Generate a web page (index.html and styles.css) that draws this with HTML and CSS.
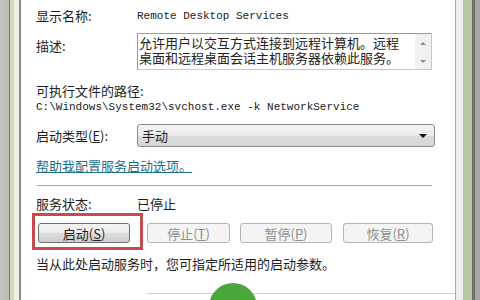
FILE: index.html
```html
<!DOCTYPE html>
<html>
<head>
    <meta charset="utf-8">
    <link rel="stylesheet" href="styles.css">
</head>
<body>
    <div class="screen">
        <div class="frame-left"></div>

        <div class="dialog">
            <div class="row row-name">
                <span class="label">显示名称:</span>
                <span class="mono">Remote Desktop Services</span>
            </div>

            <div class="row row-desc">
                <span class="label">描述:</span>
                <div class="desc-box">
                    <div class="desc-text">
                        <div>允许用户以交互方式连接到远程计算机。远程</div>
                        <div>桌面和远程桌面会话主机服务器依赖此服务。</div>
                    </div>
                    <div class="scroll">
                        <span class="arrow-up"></span>
                        <span class="arrow-down"></span>
                    </div>
                </div>
            </div>

            <div class="path-label">可执行文件的路径:</div>
            <div class="mono path">C:\Windows\System32\svchost.exe -k NetworkService</div>

            <div class="row row-type">
                <span class="label">启动类型(<u>E</u>):</span>
                <div class="combo">
                    <span>手动</span>
                    <span class="combo-arrow"></span>
                </div>
            </div>

            <a class="help-link" href="#">帮助我配置服务启动选项。</a>

            <div class="separator"></div>

            <div class="row row-status">
                <span class="label">服务状态:</span>
                <span>已停止</span>
            </div>

            <div class="buttons">
                <div class="start-wrap">
                    <button class="btn btn-start">启动(<u>S</u>)</button>
                    <span class="highlight"></span>
                </div>
                <button class="btn btn-stop" disabled>停止(<u>T</u>)</button>
                <button class="btn btn-pause" disabled>暂停(<u>P</u>)</button>
                <button class="btn btn-resume" disabled>恢复(<u>R</u>)</button>
            </div>

            <div class="hint">当从此处启动服务时，您可指定所适用的启动参数。</div>

            <div class="footer"></div>
            <div class="watermark"></div>
        </div>

        <div class="frame-right"></div>
    </div>
</body>
</html>
```

FILE: styles.css
```css
body {
    margin: 0;
    font-family: "Noto Sans CJK SC", "Liberation Sans", sans-serif;
    font-size: 13px;
    color: #1e1e1e;
}

.screen {
    display: flex;
    width: 480px;
    height: 300px;
    overflow: hidden;
    background: #fff;
}

/* window frame pieces on both sides */
.frame-left {
    width: 21px;
    flex-shrink: 0;
    background: linear-gradient(to right,
        #c3c5c0 0, #b9bcb6 9px,
        #7d807a 9px, #7d807a 10px,
        #d2dab8 10px, #d2dab8 14px,
        #eef0ea 14px, #eef0ea 19px,
        #8c8e8a 19px, #8c8e8a 21px);
}

.frame-right {
    width: 25px;
    flex-shrink: 0;
    background: linear-gradient(to right,
        #a9aba8 0, #a9aba8 1px,
        #eef0ec 1px, #eef0ec 8px,
        #b6c69e 8px, #b6c69e 17px,
        #6f716e 17px, #6f716e 20px,
        #a6a8a5 20px);
}

.dialog {
    position: relative;
    flex: 1;
    padding-left: 15px;
    overflow: hidden;
    background: #fff;
}

.row {
    display: grid;
    grid-template-columns: 101px 1fr;
    align-items: start;
}

.row-name {
    height: 32px;
    line-height: 32px;
}

.mono {
    font-family: "Liberation Mono", monospace;
    font-size: 11px;
    color: #202020;
}

.row-desc {
    margin-top: 1px;
}

.row-desc .label {
    line-height: 26px;
}

.desc-box {
    display: flex;
    width: 295px;
    height: 37px;
    box-sizing: border-box;
    border: 1px solid #c9c9c9;
    border-top-color: #9a9a9a;
    border-left-color: #9a9a9a;
    background: #fff;
}

.desc-text {
    flex: 1;
    padding: 1px 0 0 1px;
    line-height: 15px;
    white-space: nowrap;
    color: #222;
}

.scroll {
    width: 16px;
    display: flex;
    flex-direction: column;
    justify-content: space-between;
    align-items: center;
    padding: 8px 0 6px;
    background: #f1f1f1;
}

.arrow-up,
.arrow-down {
    width: 0;
    height: 0;
    border-left: 3px solid transparent;
    border-right: 3px solid transparent;
}

.arrow-up {
    border-bottom: 3px solid #8a8a8a;
}

.arrow-down {
    border-top: 3px solid #8a8a8a;
}

.path-label {
    margin-top: 11px;
    line-height: 20px;
}

.path {
    line-height: 12px;
}

.row-type {
    margin-top: 11px;
}

.row-type .label {
    line-height: 23px;
}

.combo {
    display: flex;
    align-items: center;
    justify-content: space-between;
    width: 298px;
    height: 23px;
    box-sizing: border-box;
    padding: 0 7px 0 4px;
    border: 1px solid #8a8a8a;
    border-radius: 3px;
    background: linear-gradient(#f6f6f6, #e9e9e9 50%, #dcdcdc 51%, #d6d6d6);
}

.combo-arrow {
    width: 0;
    height: 0;
    border-left: 4px solid transparent;
    border-right: 4px solid transparent;
    border-top: 4px solid #111;
}

.help-link {
    display: block;
    width: max-content;
    margin-top: 9px;
    line-height: 20px;
    color: #1f6f8b;
    text-decoration: underline;
}

.separator {
    width: 395px;
    height: 1px;
    margin: 9px 0 0 1px;
    background: #a8a8a8;
}

.row-status {
    margin-top: 8px;
    line-height: 20px;
}

.buttons {
    display: flex;
    margin-top: 9px;
    padding-left: 2px;
}

.btn {
    height: 20px;
    padding: 0;
    box-sizing: border-box;
    border: 1px solid #707070;
    border-radius: 3px;
    background: linear-gradient(#f3f3f3, #ebebeb 50%, #dddddd 51%, #cfcfcf);
    font-family: "Noto Sans CJK SC", sans-serif;
    font-size: 13px;
    line-height: 17px;
    color: #1e1e1e;
}

.btn:disabled {
    border-color: #b2b6b9;
    background: #f4f4f4;
    color: #8f8f8f;
}

.start-wrap {
    position: relative;
}

.btn-start {
    width: 92px;
}

.btn-stop {
    width: 83px;
    margin-left: 17px;
}

.btn-pause {
    width: 92px;
    margin-left: 10px;
}

.btn-resume {
    width: 90px;
    margin-left: 11px;
}

/* red annotation box drawn over the start button */
.highlight {
    position: absolute;
    top: -10px;
    left: -6px;
    right: -13px;
    bottom: -7px;
    border: 3px solid #c64a50;
}

.hint {
    margin-top: 11px;
    line-height: 20px;
}

.footer {
    width: 308px;
    height: 1px;
    margin: 19px 0 0 111px;
    background: #cfcfcf;
}

/* green watermark circle at the lower edge */
.watermark {
    position: absolute;
    left: 188px;
    top: 283px;
    width: 48px;
    height: 48px;
    border-radius: 50%;
    background: #4aa73a;
}
```
